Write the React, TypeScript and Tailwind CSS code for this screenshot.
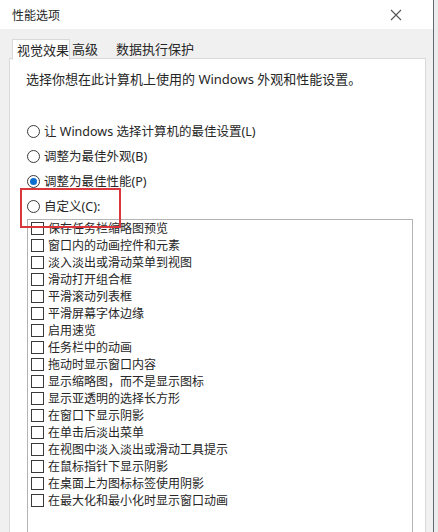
import React from "react";

const items = [
  "保存任务栏缩略图预览",
  "窗口内的动画控件和元素",
  "淡入淡出或滑动菜单到视图",
  "滑动打开组合框",
  "平滑滚动列表框",
  "平滑屏幕字体边缘",
  "启用速览",
  "任务栏中的动画",
  "拖动时显示窗口内容",
  "显示缩略图，而不是显示图标",
  "显示亚透明的选择长方形",
  "在窗口下显示阴影",
  "在单击后淡出菜单",
  "在视图中淡入淡出或滑动工具提示",
  "在鼠标指针下显示阴影",
  "在桌面上为图标标签使用阴影",
  "在最大化和最小化时显示窗口动画",
];

const radios = [
  { label: "让 Windows 选择计算机的最佳设置(L)", checked: false },
  { label: "调整为最佳外观(B)", checked: false },
  { label: "调整为最佳性能(P)", checked: true },
  { label: "自定义(C):", checked: false },
];

function Radio({ checked }: { checked: boolean }) {
  return (
    <span className="w-[13px] h-[13px] rounded-full border border-[#3a3a3a] bg-white flex items-center justify-center shrink-0">
      {checked && <span className="w-[7px] h-[7px] rounded-full bg-[#0b6fd0]" />}
    </span>
  );
}

export default function App() {
  return (
    <div
      className="w-[438px] h-[532px] overflow-hidden flex bg-[#eeeeee] text-[#262626]"
      style={{ fontFamily: '"Noto Sans", "Noto Sans CJK SC", sans-serif' }}
    >
      <div className="w-[433px] h-full flex flex-col shrink-0">
        <div className="h-[29px] bg-white flex items-center justify-between pl-[12px] pr-[31px] shrink-0">
          <span className="text-[12px] leading-[16px] mt-[2px]">性能选项</span>
          <svg width="12" height="12" viewBox="0 0 12 12" className="mt-[1px]">
            <path d="M1 1 L11 11 M11 1 L1 11" stroke="#555555" strokeWidth="1.1" fill="none" />
          </svg>
        </div>
        <div className="flex-1 bg-[#f0f0f0] flex flex-col pl-[9px] pr-[7px] pt-[10px] min-h-0">
          <div className="flex h-[20px] text-[13px] leading-[18px] relative z-10 -mb-[1px] shrink-0">
            <div className="ml-[3px] w-[58px] h-[21px] bg-white border border-b-0 border-[#d9d9d9] pl-[4px] pt-[1px]">视觉效果</div>
            <div className="w-[44px] pl-[2px] pt-[1px]">高级</div>
            <div className="pl-[2px] pt-[1px]">数据执行保护</div>
          </div>
          <div className="flex-1 bg-white border border-b-0 border-[#d9d9d9] relative flex flex-col min-h-0">
            <div className="pl-[16px] pt-[11px] text-[13px] leading-[18px]">
              选择你想在此计算机上使用的 Windows 外观和性能设置。
            </div>
            <div className="mt-[31px] pl-[17px] flex flex-col">
              {radios.map((r) => (
                <div key={r.label} className="h-[25px] flex items-center gap-[4px] text-[12.5px] leading-[18px]">
                  <Radio checked={r.checked} />
                  <span>{r.label}</span>
                </div>
              ))}
            </div>
            <div className="ml-[17px] w-[386px] flex-1 border border-b-0 border-[#b4b4b4] flex flex-col pl-[3px]">
              {items.map((t) => (
                <div key={t} className="h-[17px] flex items-center gap-[4px] text-[12px] leading-[16px] shrink-0">
                  <span className="w-[13px] h-[13px] border border-[#3a3a3a] bg-white shrink-0" />
                  <span>{t}</span>
                </div>
              ))}
            </div>
            <div className="absolute left-[10px] top-[129px] w-[101px] h-[40px] border-2 border-[#d8383c] z-20 pointer-events-none" />
          </div>
        </div>
      </div>
      <div className="w-[1px] h-full bg-[#5f6a75] shrink-0" />
      <div className="flex-1 h-full bg-[#ececec]" />
    </div>
  );
}
